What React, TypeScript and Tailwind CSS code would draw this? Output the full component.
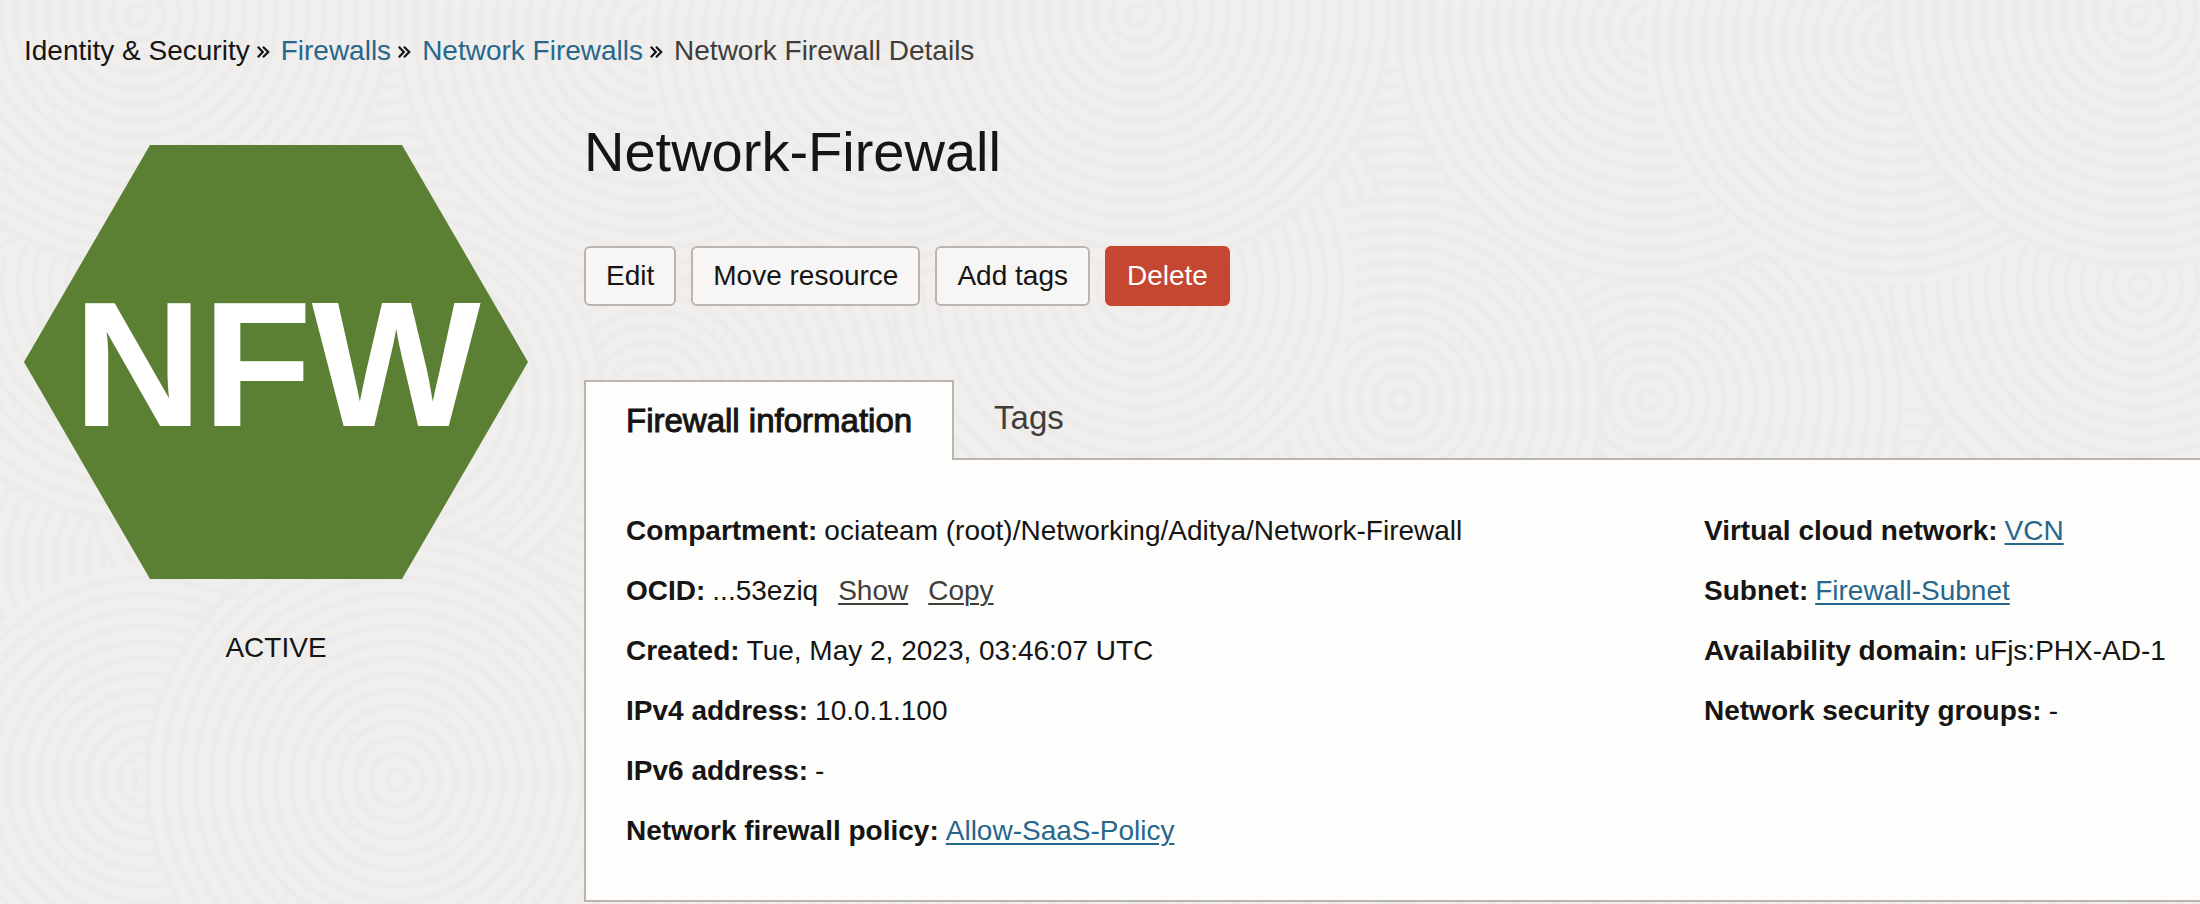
import React from "react";

type Disc = [cx: number, cy: number, r: number];

const TILE_WIDTH = 1000;
const TILE_HEIGHT = 1200;
const RINGS = Array.from({ length: 21 }, (_, i) => 10 + i * 16);

// Painted back to front; each disc hides the ones below it.
const DISCS: Disc[] = [
  [650, 620, 250],
  [900, 660, 250],
  [145, 560, 250],
  [400, 580, 250],
  [650, 400, 255],
  [400, 400, 330],
  [140, 270, 250],
  [650, 400, 235],
  [400, 400, 205],
  [650, 30, 255],
  [140, 285, 215],
  [890, 40, 245],
  [138, 15, 250],
  [650, 860, 250],
  [900, 900, 250],
  [145, 780, 215],
  [397, 780, 250],
];

function DiscShape({ disc: [cx, cy, r] }: { disc: Disc }) {
  return (
    <g>
      <circle cx={cx} cy={cy} r={r} fill="#f0efee" />
      {RINGS.filter((ring) => ring <= r).map((ring) => (
        <g key={ring} fill="none">
          <circle cx={cx} cy={cy} r={ring} stroke="#eeedeb" strokeWidth={8} />
          <circle cx={cx} cy={cy} r={ring} stroke="#ecebe9" strokeWidth={4} />
        </g>
      ))}
    </g>
  );
}

function Backdrop() {
  return (
    <svg aria-hidden="true" className="absolute inset-0 -z-10 h-full w-full">
      <defs>
        <pattern id="ripples" width={TILE_WIDTH} height={TILE_HEIGHT} patternUnits="userSpaceOnUse">
          <rect width={TILE_WIDTH} height={TILE_HEIGHT} fill="#f0efee" />
          {DISCS.map((disc, i) => {
            const [cx, cy, r] = disc;
            return (
              <g key={i}>
                <DiscShape disc={disc} />
                {cx - r < 0 && <DiscShape disc={[cx + TILE_WIDTH, cy, r]} />}
                {cx + r > TILE_WIDTH && <DiscShape disc={[cx - TILE_WIDTH, cy, r]} />}
              </g>
            );
          })}
        </pattern>
      </defs>
      <rect width="100%" height="100%" fill="url(#ripples)" />
    </svg>
  );
}

function Separator() {
  return (
    <svg aria-hidden="true" viewBox="0 0 13 12" className="mx-[7px] mt-0.5 h-3 w-[13px]" fill="none" stroke="#161513" strokeWidth="2.2">
      <path d="M0.8 0.8 5.8 6 0.8 11.2M6 0.8 11.2 6 6 11.2" />
    </svg>
  );
}

function Breadcrumb() {
  return (
    <nav aria-label="Breadcrumb">
      <ol className="flex items-center">
        <li>Identity &amp; Security</li>
        <li className="flex items-center">
          <Separator />
          <a href="#firewalls" className="ml-1 text-[#27678c]">Firewalls</a>
        </li>
        <li className="flex items-center">
          <Separator />
          <a href="#network-firewalls" className="ml-1 text-[#27678c]">Network Firewalls</a>
        </li>
        <li className="flex items-center" aria-current="page">
          <Separator />
          <span className="ml-1 text-[#403d3a]">Network Firewall Details</span>
        </li>
      </ol>
    </nav>
  );
}

function StatusBadge() {
  return (
    <aside className="flex w-[504px] shrink-0 flex-col items-center gap-[53px] pt-5">
      <svg viewBox="0 0 504 434" className="w-full" role="img" aria-label="NFW">
        <polygon points="0,217 126,0 378,0 504,217 378,434 126,434" fill="#5b8034" />
        <text x="253" y="281" textAnchor="middle" fill="#fff" fontSize="179" fontWeight="700">
          NFW
        </text>
      </svg>
      <p>ACTIVE</p>
    </aside>
  );
}

function ActionButton({ children, danger = false }: { children: React.ReactNode; danger?: boolean }) {
  const tone = danger
    ? "border-[#c54731] bg-[#c54731] text-white"
    : "border-[#bbb4af] bg-[#f7f6f5]";
  return (
    <button type="button" className={`h-15 rounded-md border-2 px-5 ${tone}`}>
      {children}
    </button>
  );
}

function Field({ label, children }: { label: string; children: React.ReactNode }) {
  return (
    <div className="flex gap-[7px]">
      <dt className="font-bold">{label}:</dt>
      <dd>{children}</dd>
    </div>
  );
}

const underlined = "underline decoration-2 underline-offset-3";

function FieldLink({ href, children }: { href: string; children: React.ReactNode }) {
  return (
    <a href={href} className={`text-[#27678c] ${underlined}`}>
      {children}
    </a>
  );
}

export default function App() {
  return (
    <div className="relative isolate min-h-screen pt-[35px] pl-6 font-['Liberation_Sans',Arial,sans-serif] text-[28px] leading-8 text-[#161513]">
      <Backdrop />
      <Breadcrumb />
      <div className="mt-[58px] flex gap-14">
        <StatusBadge />
        <main className="min-w-0 flex-1">
          <h1 className="text-[56px] leading-[54px]">Network-Firewall</h1>
          <div className="mt-[67px] flex gap-[15px]">
            <ActionButton>Edit</ActionButton>
            <ActionButton>Move resource</ActionButton>
            <ActionButton>Add tags</ActionButton>
            <ActionButton danger>Delete</ActionButton>
          </div>
          <div role="tablist" className="relative z-10 -mb-0.5 mt-[74px] flex text-[33px]">
            <button
              type="button"
              role="tab"
              aria-selected="true"
              className="h-20 border-2 border-b-0 border-[#bbb4af] bg-[#fdfdfc] px-10 [-webkit-text-stroke:1px_#161513]"
            >
              Firewall information
            </button>
            <button type="button" role="tab" aria-selected="false" className="h-[76px] px-10 text-[#403d3a]">
              Tags
            </button>
          </div>
          <section
            role="tabpanel"
            className="grid grid-cols-[1fr_496px] border-2 border-r-0 border-[#bbb4af] bg-[#fdfdfc] pt-[41px] pb-[39px] pl-10 leading-[60px]"
          >
            <dl>
              <Field label="Compartment">ociateam (root)/Networking/Aditya/Network-Firewall</Field>
              <Field label="OCID">
                ...53eziq
                <button type="button" className={`ml-5 text-[#403d3a] ${underlined}`}>Show</button>
                <button type="button" className={`ml-5 text-[#403d3a] ${underlined}`}>Copy</button>
              </Field>
              <Field label="Created">Tue, May 2, 2023, 03:46:07 UTC</Field>
              <Field label="IPv4 address">10.0.1.100</Field>
              <Field label="IPv6 address">-</Field>
              <Field label="Network firewall policy">
                <FieldLink href="#policy">Allow-SaaS-Policy</FieldLink>
              </Field>
            </dl>
            <dl>
              <Field label="Virtual cloud network">
                <FieldLink href="#vcn">VCN</FieldLink>
              </Field>
              <Field label="Subnet">
                <FieldLink href="#subnet">Firewall-Subnet</FieldLink>
              </Field>
              <Field label="Availability domain">uFjs:PHX-AD-1</Field>
              <Field label="Network security groups">-</Field>
            </dl>
          </section>
        </main>
      </div>
    </div>
  );
}
